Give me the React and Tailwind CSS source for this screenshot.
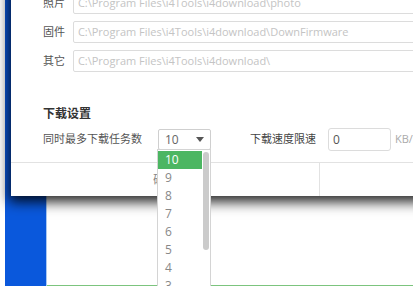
const font = { fontFamily: '"Open Sans", "Noto Sans CJK SC", sans-serif' }

function PathRow({ label, value }) {
  return (
    <div className="flex items-center h-[22px]">
      <span className="w-[30px] text-[11px] text-[#555]">{label}</span>
      <div className="w-[560px] h-[22px] border border-[#dcdcdc] rounded-[2px] flex items-center pl-[4px] text-[11px] text-[#c4c4c4] whitespace-nowrap">
        {value}
      </div>
    </div>
  )
}

export default function App() {
  const options = ['10', '9', '8', '7', '6', '5', '4', '3']

  return (
    <div className="relative w-[413px] h-[286px] overflow-hidden bg-white" style={font}>
      {/* desktop behind */}
      <div className="flex h-full">
        <div className="w-[5px] bg-white" />
        <div className="w-[41px] bg-[#0a58dc]" />
        <div className="w-[1px] bg-[#a9c8f2]" />
        <div className="flex-1 flex flex-col justify-end bg-white">
          <div className="h-[1px] bg-[#7cc47e]" />
        </div>
      </div>

      {/* settings dialog */}
      <div className="absolute left-[11px] top-[-40px] w-[620px] h-[236px] bg-white flex flex-col shadow-[0_4px_12px_2px_rgba(0,0,0,0.85)]">
        <div className="pl-[32px] pt-[32px] flex flex-col gap-[7px]">
          <PathRow label="照片" value="C:\Program Files\i4Tools\i4download\photo" />
          <PathRow label="固件" value="C:\Program Files\i4Tools\i4download\DownFirmware" />
          <PathRow label="其它" value="C:\Program Files\i4Tools\i4download\" />
        </div>

        <div className="pl-[32px] mt-[34px] text-[12px] font-bold text-[#333] leading-[16px]">下载设置</div>

        <div className="pl-[32px] mt-[6px] flex items-center h-[23px]">
          <span className="w-[115px] text-[11px] text-[#555]">同时最多下载任务数</span>
          <div className="w-[53px] h-[21px] border border-[#cfcfcf] rounded-[2px] flex items-center justify-between pl-[6px] pr-[6px] text-[12px] text-[#666]">
            <span>10</span>
            <svg width="8" height="5" viewBox="0 0 8 5"><path d="M0 0h8L4 5z" fill="#555" /></svg>
          </div>
          <span className="ml-[39px] w-[78px] text-[11px] text-[#444]">下载速度限速</span>
          <div className="w-[63px] h-[23px] border border-[#dcdcdc] rounded-[3px] flex items-center pl-[4px] text-[12px] text-[#555]">0</div>
          <span className="ml-[4px] text-[11px] text-[#aaa]">KB/s</span>
        </div>

        <div className="mt-[11px] flex-1 flex border-t border-[#e2e2e2]">
          <div className="w-[309px] flex items-center justify-center text-[12px] text-[#888] border-r border-[#e2e2e2]">确定</div>
          <div className="flex-1 flex items-center justify-center text-[12px] text-[#888]">取消</div>
        </div>
      </div>

      {/* open select list */}
      <div className="absolute left-[157px] top-[149px] w-[54px] h-[150px] bg-white border border-[#d4d4d4] pt-[1px]">
        {options.map((o, i) => (
          <div
            key={o}
            className={
              i === 0
                ? 'h-[18px] mr-[8px] pl-[7px] flex items-center text-[12px] bg-[#4cb662] text-white'
                : 'h-[18px] mr-[8px] pl-[7px] flex items-center text-[12px] text-[#888]'
            }
          >
            {o}
          </div>
        ))}
        <div className="absolute right-[1px] top-[2px] w-[6px] h-[98px] rounded-[3px] bg-[#cbcbcb]" />
      </div>
    </div>
  )
}
